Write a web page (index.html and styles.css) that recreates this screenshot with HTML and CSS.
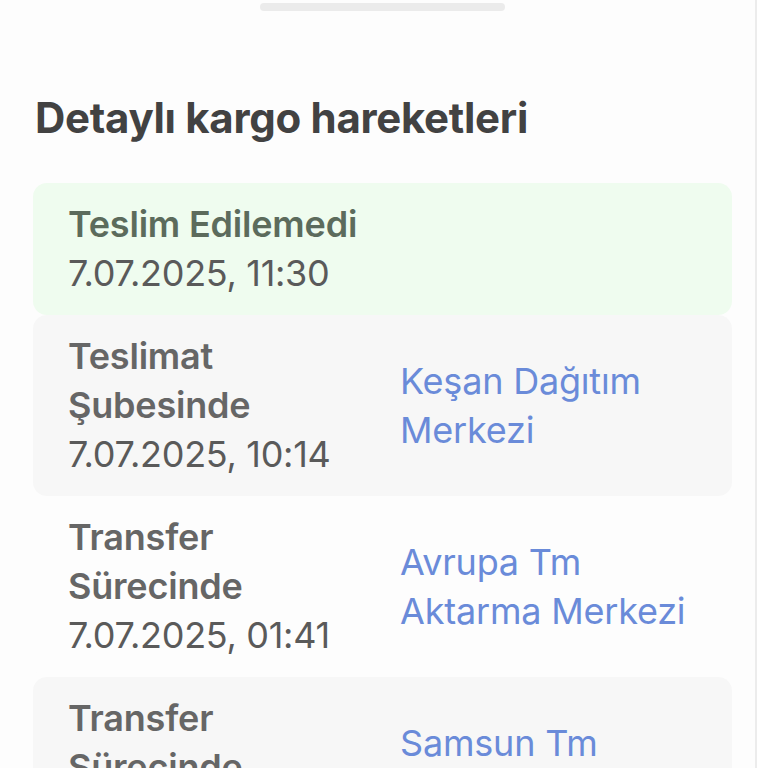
FILE: index.html
```html
<!DOCTYPE html>
<html lang="tr">
<head>
<meta charset="utf-8">
<link rel="stylesheet" href="styles.css">
</head>
<body>
<div class="sheet">
  <div class="handle"></div>
  <h2 class="title">Detaylı kargo hareketleri</h2>
  <div class="list">
    <div class="row row-green">
      <div class="left">
        <div class="status status-green">Teslim Edilemedi</div>
        <div class="date">7.07.2025, 11:30</div>
      </div>
      <div class="place"></div>
    </div>
    <div class="row row-gray">
      <div class="left">
        <div class="status">Teslimat Şubesinde</div>
        <div class="date">7.07.2025, 10:14</div>
      </div>
      <div class="place">Keşan Dağıtım Merkezi</div>
    </div>
    <div class="row">
      <div class="left">
        <div class="status">Transfer Sürecinde</div>
        <div class="date">7.07.2025, 01:41</div>
      </div>
      <div class="place">Avrupa Tm Aktarma Merkezi</div>
    </div>
    <div class="row row-gray">
      <div class="left">
        <div class="status">Transfer Sürecinde</div>
        <div class="date">6.07.2025, 14:02</div>
      </div>
      <div class="place">Samsun Tm Aktarma Merkezi</div>
    </div>
  </div>
</div>
</body>
</html>
```
FILE: styles.css
```css
html, body {
  margin: 0;
  padding: 0;
  background: #ffffff;
  height: 768px;
  overflow: hidden;
}
body {
  font-family: Inter, "Noto Sans", sans-serif;
}
.sheet {
  width: 757px;
  min-height: 768px;
  box-sizing: border-box;
  border-right: 2px solid #ececec;
  background: #fdfdfd;
  padding: 3px 23px 0 33px;
  display: flex;
  flex-direction: column;
}
.handle {
  flex-shrink: 0;
  align-self: center;
  width: 245px;
  height: 8px;
  border-radius: 4px;
  background: #ebebeb;
}
.title {
  margin: 83px 0 41px 2px;
  font-size: 42px;
  font-weight: 700;
  letter-spacing: -0.3px;
  line-height: 48px;
  color: #424242;
}
.list {
  display: flex;
  flex-direction: column;
}
.row {
  display: grid;
  grid-template-columns: 1fr 1fr;
  column-gap: 35px;
  align-items: center;
  padding: 17px 35px;
  border-radius: 14px;
  background: #fdfdfd;
}
.row-green { background: #effcef; }
.row-gray { background: #f7f7f7; }
.status {
  font-size: 36px;
  font-weight: 600;
  line-height: 49px;
  color: #666666;
  letter-spacing: -0.2px;
}
.status-green { color: #5c6b5c; }
.date {
  font-size: 36px;
  line-height: 49px;
  color: #5a5a5a;
  letter-spacing: -0.3px;
}
.place {
  font-size: 36px;
  line-height: 49px;
  color: #6a8bd9;
  letter-spacing: -0.2px;
}
```
